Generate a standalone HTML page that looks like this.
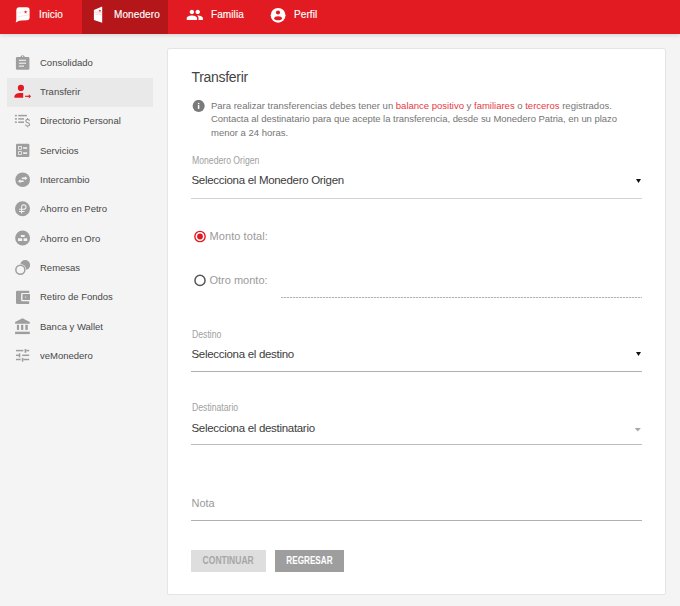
<!DOCTYPE html>
<html><head><meta charset="utf-8">
<style>
*{margin:0;padding:0;box-sizing:border-box}
html,body{width:680px;height:606px;overflow:hidden;background:#f4f4f4;font-family:"Liberation Sans",sans-serif;position:relative}
.a{position:absolute;white-space:nowrap}
#hdr{position:absolute;left:0;top:0;width:680px;height:34px;background:#e11b21;box-shadow:0 1px 4px rgba(0,0,0,.15)}
#tab{position:absolute;left:82px;top:0;width:86px;height:34px;background:#b5161a}
.ht{color:#fff;font-size:10px;line-height:12px;letter-spacing:0.1px;-webkit-text-stroke:0.15px #fff}
.si{color:#484848;font-size:9.5px;line-height:12px}
#hl{position:absolute;left:7px;top:77.5px;width:146px;height:29.5px;background:#e9e9e9}
#card{position:absolute;left:168px;top:49px;width:497px;height:545px;background:#fff;border-radius:1.5px;box-shadow:0 0 0 1px rgba(0,0,0,.035),0 0 2px rgba(0,0,0,.1)}
.lbl{color:#a0a0a0;font-size:10px;line-height:10px;transform:scaleX(0.865);transform-origin:0 0}
.sel{color:#3c3c3c;font-size:11.5px;line-height:13px;letter-spacing:-0.3px}
.ul{position:absolute;left:191px;width:451px;height:1px}
.btn{position:absolute;top:550px;height:22px;font-weight:bold;font-size:10.4px;text-align:center;line-height:22px}
.btn span{display:inline-block}
</style></head><body>
<div id="hdr"></div>
<div id="tab"></div>
<!-- header icons -->
<svg class="a" style="left:14px;top:7px" width="18" height="18" viewBox="0 0 18 18">
  <path d="M5.2 0.3 L13 0.3 Q15.6 0.3 15.6 3 L15.6 10.4 Q15.6 13.1 13 13.2 Q6.5 13.2 4 14.2 Q2.6 14.8 1.7 15.6 Q2.6 13 2.3 9.5 L2.3 3.4 Q2.4 0.4 5.2 0.3 Z" fill="#fff"/>
  <path d="M2.6 6.2 Q8 4.6 15 4.2 M2.6 10.6 Q8 8.4 15 7.9" stroke="#f7c4c4" stroke-width="0.45" fill="none"/>
  <polygon points="11.60,3.25 12.04,4.39 13.26,4.46 12.31,5.23 12.63,6.42 11.60,5.75 10.57,6.42 10.89,5.23 9.94,4.46 11.16,4.39" fill="#e11b21"/>
</svg>
<div class="a ht" style="left:39px;top:9px">Inicio</div>
<svg class="a" style="left:88px;top:3px" width="20" height="24" viewBox="0 0 20 24">
  <path d="M5.9 6.9 L14.2 3.6 L14.2 19.8 L5.9 17 Z" fill="#fff"/>
  <path d="M6.5 9.6 Q10 8.2 13.8 9.8 M7.5 11.3 Q10.5 10.4 13.8 12" stroke="#f0a0a0" stroke-width="0.5" fill="none"/>
  <polygon points="11.9,6.4 12.25,7.3 13.2,7.35 12.45,7.95 12.7,8.9 11.9,8.35 11.1,8.9 11.35,7.95 10.6,7.35 11.55,7.3" fill="#d0151b"/>
</svg>
<div class="a ht" style="left:114px;top:9px">Monedero</div>
<svg class="a" style="left:185.9px;top:6.2px" width="17.66" height="17.66" viewBox="0 0 24 24">
  <path d="M16 11c1.66 0 2.99-1.34 2.99-3S17.66 5 16 5c-1.66 0-3 1.34-3 3s1.34 3 3 3zm-8 0c1.66 0 2.99-1.34 2.99-3S9.66 5 8 5C6.34 5 5 6.34 5 8s1.34 3 3 3zm0 2c-2.33 0-7 1.17-7 3.5V19h14v-2.5c0-2.33-4.67-3.5-7-3.5zm8 0c-.29 0-.62.02-.97.05 1.16.84 1.97 1.970 1.97 3.45V19h6v-2.5c0-2.33-4.67-3.5-7-3.5z" fill="#fff"/>
</svg>
<div class="a ht" style="left:211px;top:9px">Familia</div>
<svg class="a" style="left:266px;top:4px" width="24" height="22" viewBox="0 0 24 22">
  <circle cx="12.1" cy="11.35" r="7.4" fill="#fff"/>
  <circle cx="12" cy="8.55" r="2.05" fill="#e11b21"/>
  <path d="M8 14.4 Q8.6 12.4 12.1 12.3 Q15.6 12.4 16.2 14.4 Q15.6 16.2 12.1 16.2 Q8.6 16.2 8 14.4 Z" fill="#e11b21"/>
</svg>
<div class="a ht" style="left:294px;top:9px">Perfil</div>

<!-- sidebar -->
<div id="hl"></div>
<div class="a si" style="left:40px;top:57px">Consolidado</div>
<div class="a si" style="left:40px;top:86px">Transferir</div>
<div class="a si" style="left:40px;top:115px">Directorio Personal</div>
<div class="a si" style="left:40px;top:145px">Servicios</div>
<div class="a si" style="left:40px;top:174px">Intercambio</div>
<div class="a si" style="left:40px;top:203px">Ahorro en Petro</div>
<div class="a si" style="left:40px;top:233px">Ahorro en Oro</div>
<div class="a si" style="left:40px;top:262px">Remesas</div>
<div class="a si" style="left:40px;top:291px">Retiro de Fondos</div>
<div class="a si" style="left:40px;top:321px">Banca y Wallet</div>
<div class="a si" style="left:40px;top:350px">veMonedero</div>
<!-- sidebar icons -->
<svg class="a" style="left:10px;top:50px" width="24" height="24" viewBox="0 0 24 24">
  <path d="M7 7 L10.3 7 Q10.6 5.3 12.6 5.2 Q14.6 5.3 14.9 7 L18.3 7 Q19.4 7 19.4 8.1 L19.4 18.8 Q19.4 19.8 18.3 19.8 L7 19.8 Q5.9 19.8 5.9 18.8 L5.9 8.1 Q5.9 7 7 7 Z" fill="#9e9e9e"/>
  <circle cx="12.6" cy="6.5" r="0.6" fill="#f4f4f4"/>
  <rect x="8.9" y="9.75" width="7.1" height="1.1" fill="#f4f4f4"/>
  <rect x="8.9" y="12.65" width="7.1" height="1.1" fill="#f4f4f4"/>
  <rect x="8.9" y="15.55" width="5.1" height="1.1" fill="#f4f4f4"/>
</svg>
<svg class="a" style="left:10px;top:80px" width="24" height="20" viewBox="0 0 24 20">
  <circle cx="10.9" cy="7.9" r="3.1" fill="#e11b21"/>
  <path d="M4.5 17.8 L4.5 16.2 Q4.8 13.2 10 12.9 L13.2 12.9 L13.2 17.8 Z" fill="#e11b21"/>
  <rect x="15.1" y="15.7" width="4.2" height="1.2" fill="#e11b21"/>
  <path d="M18.8 14.2 L21.1 16.3 L18.8 18.4 Z" fill="#e11b21"/>
</svg>
<svg class="a" style="left:12px;top:110px" width="22" height="22" viewBox="0 0 22 22">
  <g fill="#9e9e9e">
  <rect x="2.9" y="4.85" width="2" height="1.5"/><rect x="6.2" y="4.85" width="8.7" height="1.5"/>
  <rect x="2.9" y="8.15" width="2" height="1.5"/><rect x="6.2" y="8.15" width="5.8" height="1.5"/>
  <rect x="2.9" y="11.45" width="2" height="1.5"/><rect x="6.2" y="11.45" width="5.8" height="1.5"/>
  </g>
  <path d="M17.5 10.8 Q17.2 9.3 15.6 9.3 Q13.8 9.3 13.8 10.9 Q13.8 12.2 15.6 12.6 Q17.6 13 17.6 14.6 Q17.6 16.1 15.6 16.1 Q13.7 16.1 13.5 14.5 M15.6 7.9 V9.3 M15.6 16.1 V17.2" stroke="#9e9e9e" stroke-width="1.2" fill="none"/>
</svg>
<svg class="a" style="left:12px;top:139px" width="22" height="22" viewBox="0 0 22 22">
  <rect x="4" y="4.7" width="13.4" height="13.3" rx="1.2" fill="#9e9e9e"/>
  <rect x="6.6" y="7.5" width="2.8" height="2.8" fill="none" stroke="#f4f4f4" stroke-width="0.8"/>
  <rect x="6.6" y="12.6" width="2.8" height="2.8" fill="none" stroke="#f4f4f4" stroke-width="0.8"/>
  <rect x="11.1" y="8.2" width="4" height="1.6" fill="#f4f4f4"/>
  <rect x="11.1" y="13.3" width="4" height="1.6" fill="#f4f4f4"/>
</svg>
<svg class="a" style="left:12px;top:169px" width="22" height="22" viewBox="0 0 22 22">
  <circle cx="10.65" cy="10.75" r="7.35" fill="#9e9e9e"/>
  <path d="M9.8 9.3 L13.2 9.3" stroke="#f4f4f4" stroke-width="1.6"/>
  <path d="M12.9 7.3 L15.4 9.3 L12.9 11.3 Z" fill="#f4f4f4"/>
  <path d="M8.2 12.2 L11.6 12.2" stroke="#f4f4f4" stroke-width="1.6"/>
  <path d="M8.5 10.2 L6 12.2 L8.5 14.2 Z" fill="#f4f4f4"/>
</svg>
<svg class="a" style="left:12px;top:198px" width="22" height="22" viewBox="0 0 22 22">
  <circle cx="10.5" cy="10.8" r="7.5" fill="#9e9e9e"/>
  <path d="M9.6 15.6 L9.6 8.6 Q9.8 6.7 11.6 6.7 Q14 6.8 14 9 Q14 11.3 11.6 11.3 L7.1 11.3 M7.1 13.4 L12.5 13.4" stroke="#f4f4f4" stroke-width="1.05" fill="none"/>
</svg>
<svg class="a" style="left:12px;top:227px" width="22" height="22" viewBox="0 0 22 22">
  <circle cx="10.6" cy="11.05" r="7.45" fill="#9e9e9e"/>
  <rect x="8.9" y="8" width="3.8" height="2" fill="#f4f4f4"/>
  <rect x="6" y="11.3" width="4.2" height="2.7" fill="#f4f4f4"/>
  <rect x="11.6" y="11.3" width="3.6" height="2.7" fill="#f4f4f4"/>
</svg>
<svg class="a" style="left:12px;top:256px" width="22" height="22" viewBox="0 0 22 22">
  <circle cx="13.2" cy="9" r="4.9" fill="#9e9e9e"/>
  <circle cx="8.35" cy="13.8" r="5.9" fill="#f4f4f4"/>
  <circle cx="8.35" cy="13.8" r="4.5" fill="none" stroke="#9e9e9e" stroke-width="1.5"/>
</svg>
<svg class="a" style="left:12px;top:286px" width="22" height="22" viewBox="0 0 22 22">
  <path d="M5.2 4.7 L17.2 4.7 L17.2 6.9 L10.3 6.9 Q9.1 6.9 9.1 8.1 L9.1 14 Q9.1 15.2 10.3 15.2 L17.2 15.2 L17.2 18 L5.2 18 Q4 18 4 16.8 L4 5.9 Q4 4.7 5.2 4.7 Z" fill="#9e9e9e"/>
  <rect x="10.5" y="8" width="7.5" height="6" fill="#9e9e9e"/>
  <circle cx="13.6" cy="11.1" r="0.65" fill="#f4f4f4"/>
</svg>
<svg class="a" style="left:12px;top:315px" width="22" height="22" viewBox="0 0 22 22">
  <path d="M10.45 3.3 L17.8 7 L17.8 8.7 L3.1 8.7 L3.1 7 Z" fill="#9e9e9e"/>
  <rect x="4.9" y="9.8" width="2.2" height="5.1" fill="#9e9e9e"/>
  <rect x="9" y="9.8" width="2.3" height="5.1" fill="#9e9e9e"/>
  <rect x="13.3" y="9.8" width="2.5" height="5.1" fill="#9e9e9e"/>
  <rect x="3.1" y="16.7" width="14.7" height="2.4" fill="#9e9e9e"/>
</svg>
<svg class="a" style="left:12px;top:345px" width="22" height="22" viewBox="0 0 22 22">
  <g fill="#9e9e9e">
  <rect x="4" y="4.85" width="7.3" height="1.5"/><rect x="12.6" y="4" width="1.6" height="3.8"/><rect x="14.2" y="4.85" width="3" height="1.5"/>
  <rect x="4" y="9.55" width="2.9" height="1.5"/><rect x="6.8" y="8.3" width="1.5" height="4.1"/><rect x="10.2" y="9.55" width="7" height="1.5"/>
  <rect x="4" y="13.75" width="4.7" height="1.5"/><rect x="9.8" y="12.9" width="1.5" height="3.8"/><rect x="11.3" y="13.75" width="5.9" height="1.5"/>
  </g>
</svg>

<!-- card -->
<div id="card"></div>
<div class="a" style="left:191.5px;top:69px;font-size:14px;line-height:16px;color:#444;letter-spacing:-0.3px">Transferir</div>
<svg class="a" style="left:192px;top:100px" width="14" height="14" viewBox="0 0 14 14">
  <circle cx="6.65" cy="5.95" r="6.05" fill="#7a7a7a"/>
  <rect x="5.85" y="4.9" width="1.5" height="4" fill="#fff"/>
  <rect x="5.85" y="2.9" width="1.5" height="1.25" fill="#fff"/>
</svg>
<div class="a" style="left:211px;top:99px;font-size:9.5px;line-height:13.3px;color:#757575">Para realizar transferencias debes tener un <span style="color:#e63a3f">balance positivo</span> y <span style="color:#e63a3f">familiares</span> o <span style="color:#e63a3f">terceros</span> registrados.<br><span style="letter-spacing:-0.04px">Contacta al destinatario para que acepte la transferencia, desde su Monedero Patria, en un plazo</span><br>menor a 24 horas.</div>
<div class="a lbl" style="left:191.5px;top:156px">Monedero Origen</div>
<div class="a sel" style="left:191.5px;top:174px">Selecciona el Monedero Origen</div>
<svg class="a" style="left:635px;top:178px" width="7" height="6" viewBox="0 0 7 6"><path d="M1 1 L6 1 L3.5 5 Z" fill="#111"/></svg>
<div class="ul" style="top:198px;background:#d2d2d2"></div>

<svg class="a" style="left:193px;top:230px" width="14" height="14" viewBox="0 0 14 14">
  <circle cx="7" cy="6.5" r="5.15" fill="none" stroke="#e11b21" stroke-width="1.4"/>
  <circle cx="7" cy="6.5" r="2.9" fill="#e11b21"/>
</svg>
<div class="a" style="left:209.5px;top:230px;font-size:11px;line-height:13px;color:#9a9a9a;letter-spacing:0.08px">Monto total:</div>
<svg class="a" style="left:193px;top:274px" width="14" height="14" viewBox="0 0 14 14">
  <circle cx="7" cy="6.4" r="5.05" fill="none" stroke="#555" stroke-width="1.5"/>
</svg>
<div class="a" style="left:209.5px;top:274px;font-size:11px;line-height:13px;color:#9a9a9a">Otro monto:</div>
<div class="a" style="left:281px;top:297px;width:361px;height:1px;background:repeating-linear-gradient(90deg,#b4b4b4 0 2px,#e6e6e6 2px 3px)"></div>

<div class="a lbl" style="left:191.5px;top:330px">Destino</div>
<div class="a sel" style="left:191.5px;top:348px">Selecciona el destino</div>
<svg class="a" style="left:635px;top:351px" width="7" height="6" viewBox="0 0 7 6"><path d="M1 1 L6 1 L3.5 5 Z" fill="#111"/></svg>
<div class="ul" style="top:371px;background:#b0b0b0"></div>

<div class="a lbl" style="left:191.5px;top:403px">Destinatario</div>
<div class="a sel" style="left:191.5px;top:421.5px">Selecciona el destinatario</div>
<svg class="a" style="left:634px;top:427px" width="8" height="6" viewBox="0 0 8 6"><path d="M0.8 1 L6.8 1 L3.8 4.6 Z" fill="#a8a8a8"/></svg>
<div class="ul" style="top:444px;background:#bdbdbd"></div>

<div class="a" style="left:191.5px;top:497px;font-size:11px;line-height:13px;color:#9a9a9a">Nota</div>
<div class="ul" style="top:520px;background:#b0b0b0"></div>

<div class="btn" style="left:191px;width:75px;background:#dedede;color:#a6a6a6"><span style="transform:scaleX(0.82)">CONTINUAR</span></div>
<div class="btn" style="left:275px;width:69px;background:#9e9e9e;color:#fff"><span style="transform:scaleX(0.785)">REGRESAR</span></div>
</body></html>
